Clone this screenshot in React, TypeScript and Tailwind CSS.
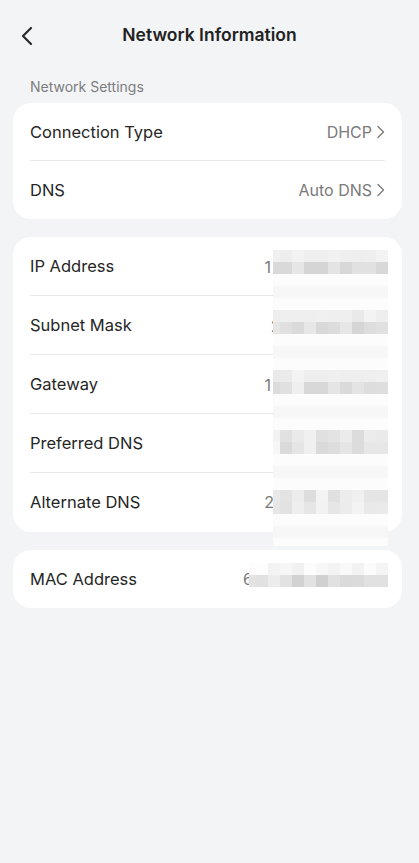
import React from 'react';

// pixelated cover over the hidden address values (12px cells, first column 7px)
const ipBlocks: string[][] = [
  ['#f0f0f0', '#ededed', '#f2f2f2', '#efefef', '#efefef', '#f1f1f1', '#efefef', '#eeeeee', '#efefef', '#f3f3f3'],
  ['#d9d9d9', '#d9d9d9', '#e6e6e6', '#d5d5d5', '#d5d5d5', '#e4e4e4', '#d8d8d8', '#e1e1e1', '#e1e1e1', '#d8d8d8'],
  ['#eeeeee', '#efefef', '#efefef', '#efefef', '#f0f0f0', '#efefef', '#efefef', '#e9e9e9', '#f3f3f3', '#eeeeee'],
  ['#e6e6e6', '#e0e0e0', '#dadada', '#e7e7e7', '#d9d9d9', '#dcdcdc', '#e6e6e6', '#d5d5d5', '#dddddd', '#e0e0e0'],
  ['#eaeaea', '#ebebeb', '#f3f3f3', '#eeeeee', '#eeeeee', '#f0f0f0', '#eeeeee', '#eeeeee', '#efefef', '#f0f0f0'],
  ['#dcdcdc', '#e0e0e0', '#efefef', '#d8d8d8', '#d8d8d8', '#e5e5e5', '#dadada', '#e4e4e4', '#dddddd', '#dedede'],
  ['#f3f3f3', '#e1e1e1', '#eaeaea', '#f0f0f0', '#e0e0e0', '#e3e3e3', '#ebebeb', '#dcdcdc', '#ececec', '#eaeaea'],
  ['#f6f6f6', '#dadada', '#e5e5e5', '#f0f0f0', '#dadada', '#dddddd', '#e5e5e5', '#dcdcdc', '#e7e7e7', '#e7e7e7'],
  ['#e9e9e9', '#e3e3e3', '#ececec', '#dddddd', '#f3f3f3', '#e0e0e0', '#ececec', '#f0f0f0', '#e5e5e5', '#e5e5e5'],
  ['#e6e6e6', '#e2e2e2', '#eeeeee', '#e6e6e6', '#f2f2f2', '#e6e6e6', '#ececec', '#f3f3f3', '#e9e9e9', '#eaeaea'],
];

const macBlocks: string[][] = [
  ['#fdfdfd', '#fdfdfd', '#f3f3f3', '#f6f6f6', '#f1f1f1', '#fcfcfc', '#f7f7f7', '#f3f3f3', '#f9f9f9', '#f2f2f2', '#fbfbfb', '#f4f4f4'],
  ['#e3e3e3', '#e1e1e1', '#ececec', '#e2e2e2', '#d2d2d2', '#e2e2e2', '#d0d0d0', '#e1e1e1', '#dadada', '#dbdbdb', '#e1e1e1', '#e1e1e1'],
];

function BlockRow({ colors }: { colors: string[] }) {
  return (
    <div className="flex h-[12px]">
      {colors.map((c, i) => (
        <div key={i} className={i === 0 ? 'w-[7px] h-full' : 'w-[12px] h-full'} style={{ backgroundColor: c }} />
      ))}
    </div>
  );
}

function Chevron() {
  return (
    <svg width="9" height="14" viewBox="0 0 9 14" fill="none" className="ml-[4px]">
      <path d="M2 1.5 L7.5 7 L2 12.5" stroke="#7a7a7a" strokeWidth="1.4" strokeLinecap="round" strokeLinejoin="round" />
    </svg>
  );
}

function Row({
  label,
  value,
  h,
  divider,
  dividerShort,
  chevron,
  valueClass,
}: {
  label: string;
  value: string;
  h: string;
  divider?: boolean;
  dividerShort?: boolean;
  chevron?: boolean;
  valueClass?: string;
}) {
  return (
    <div className={`relative flex items-center justify-between ${h}`}>
      <span className="text-[16.5px] text-[#262626]">{label}</span>
      <span className={`flex items-center text-[16px] text-[#7a7a7a] ${valueClass ?? ''}`}>
        {value}
        {chevron && <Chevron />}
      </span>
      {divider && (
        <div className={`absolute bottom-0 left-0 h-px bg-[#e8e8e8] ${dividerShort ? 'right-[112px]' : 'right-0'}`} />
      )}
    </div>
  );
}

export default function App() {
  return (
    <div className="min-h-[863px] w-full bg-[#f3f4f6] font-['Inter','Noto_Sans',sans-serif]">
      {/* Header */}
      <div className="relative flex h-[70px] items-center justify-center">
        <button className="absolute left-[18px] top-[24px] p-[2px]">
          <svg width="14" height="20" viewBox="0 0 14 20" fill="none">
            <path d="M11 2 L3 10 L11 18" stroke="#2a2a2a" strokeWidth="2.2" strokeLinecap="round" strokeLinejoin="round" />
          </svg>
        </button>
        <h1 className="text-[17.5px] font-semibold text-[#222]">Network Information</h1>
      </div>

      <p className="mt-[7px] pl-[30px] text-[14px] leading-[20px] text-[#7d7d7d]">Network Settings</p>

      {/* Settings card */}
      <div className="ml-[13px] mr-[17px] mt-[6px] rounded-[18px] bg-white px-[17px]">
        <Row label="Connection Type" value="DHCP" h="h-[58px]" divider chevron />
        <Row label="DNS" value="Auto DNS" h="h-[58px]" chevron />
      </div>

      {/* Address card */}
      <div className="relative ml-[13px] mr-[17px] mt-[18px]">
        <div className="rounded-[18px] bg-white px-[17px] pb-px">
          <Row label="IP Address" value="1" h="h-[59px]" divider dividerShort valueClass="mr-[114px]" />
          <Row label="Subnet Mask" value="2" h="h-[59px]" divider dividerShort valueClass="mr-[104.5px]" />
          <Row label="Gateway" value="1" h="h-[59px]" divider dividerShort valueClass="mr-[114px]" />
          <Row label="Preferred DNS" value="" h="h-[59px]" divider dividerShort />
          <Row label="Alternate DNS" value="2" h="h-[58px]" valueClass="mr-[111px]" />
        </div>
        <div className="absolute left-[260px] top-[13px] flex w-[115px] flex-col bg-[#fcfcfc]">
          {[0, 1, 2, 3, 4].map((r) => (
            <div key={r} className="flex flex-col">
              <BlockRow colors={ipBlocks[r * 2]} />
              <BlockRow colors={ipBlocks[r * 2 + 1]} />
              <div className="h-[12px]" />
              <div className="h-[12px] bg-[#f7f7f7]" />
              {r < 4 && <div className="h-[12px]" />}
            </div>
          ))}
          <div className="h-[8px]" />
        </div>
      </div>

      {/* MAC card */}
      <div className="relative ml-[13px] mr-[17px] mt-[18px]">
        <div className="rounded-[18px] bg-white px-[17px]">
          <Row label="MAC Address" value="6" h="h-[58px]" valueClass="mr-[132px]" />
        </div>
        <div className="absolute left-[236px] top-[13px] flex flex-col bg-[#fdfdfd]">
          <BlockRow colors={macBlocks[0]} />
          <BlockRow colors={macBlocks[1]} />
        </div>
      </div>
    </div>
  );
}
